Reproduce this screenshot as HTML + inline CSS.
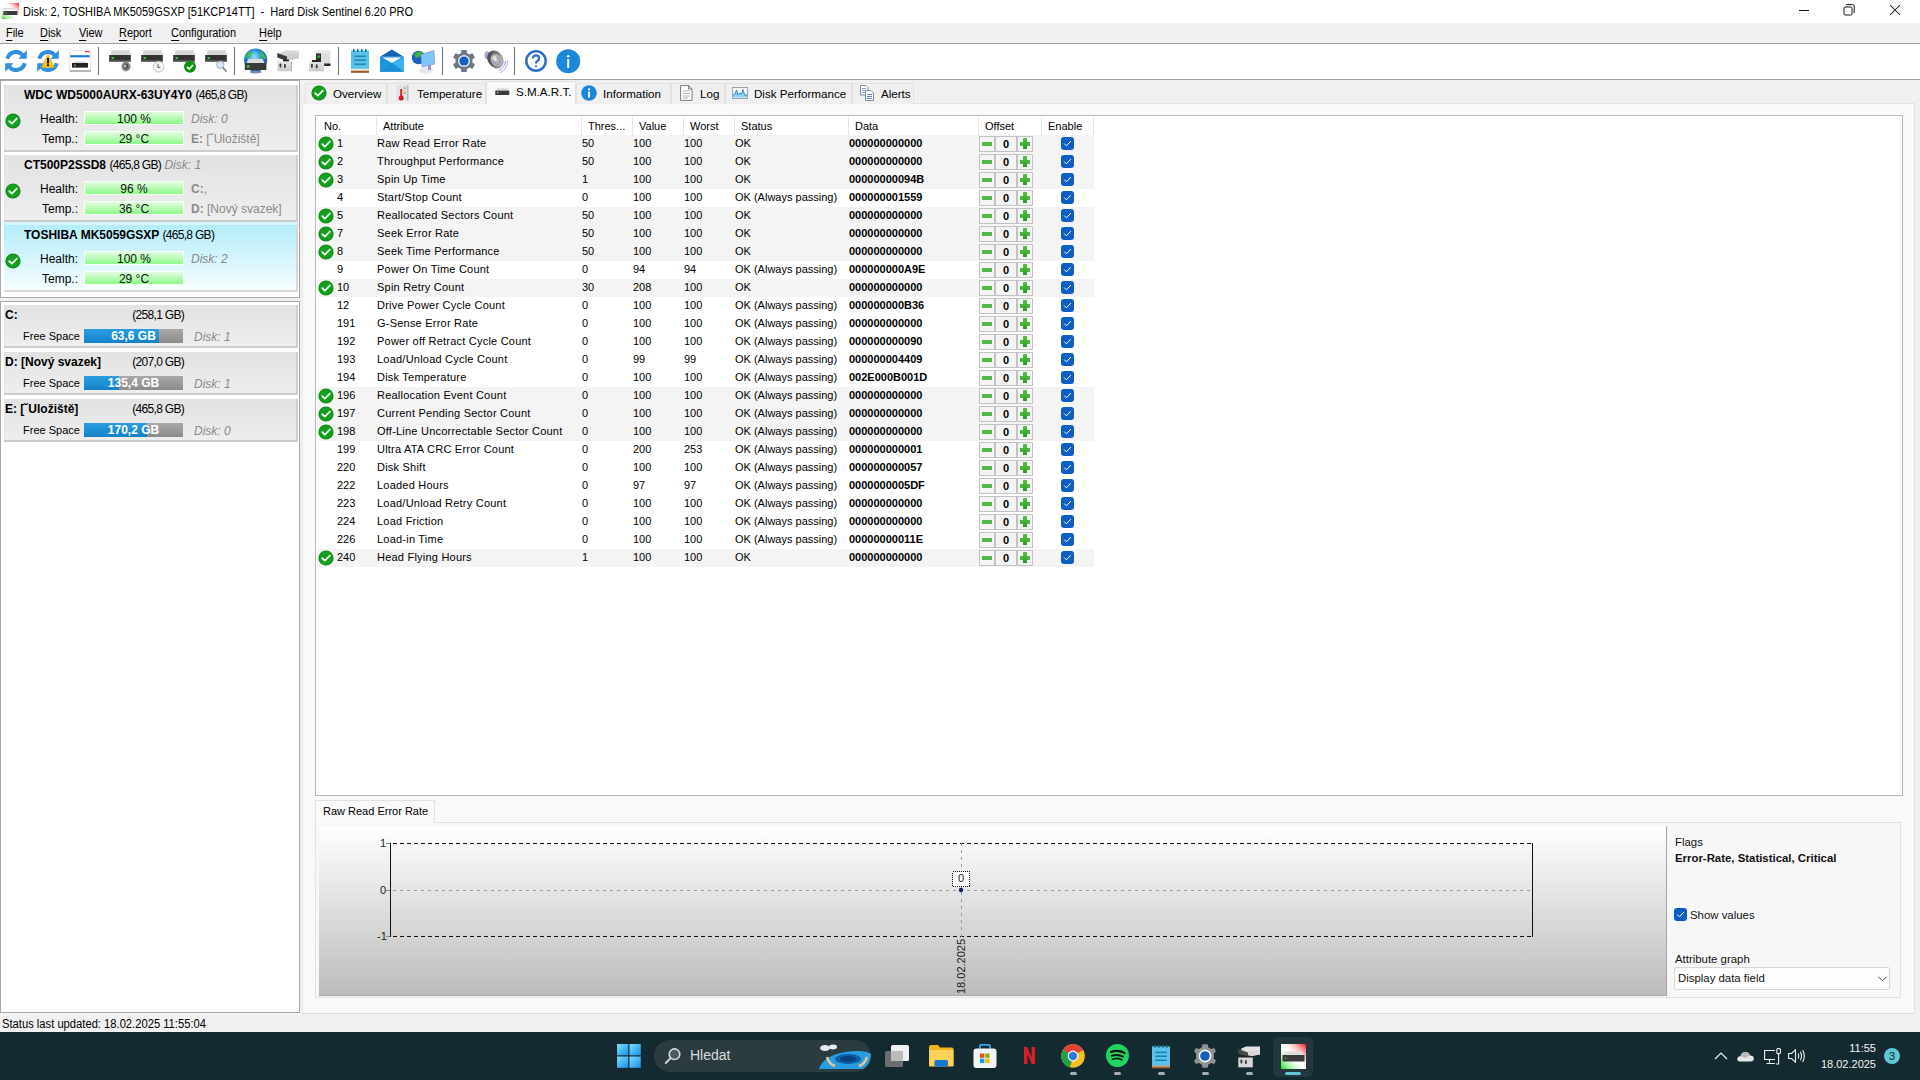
<!DOCTYPE html>
<html><head><meta charset="utf-8">
<style>
*{box-sizing:border-box;margin:0;padding:0}
html,body{width:1920px;height:1080px;overflow:hidden;background:#f0f0f0;font-family:"Liberation Sans",sans-serif;color:#000;font-size:11px}
.abs{position:absolute}
#title{position:absolute;left:0;top:0;width:1920px;height:23px;background:#fff}
#title .t{position:absolute;left:23px;top:5px;font-size:12px;white-space:pre;color:#000;transform:scaleX(0.918);transform-origin:0 0}
#menu{position:absolute;left:0;top:23px;width:1920px;height:21px;background:#f0f0f0;border-bottom:1px solid #a0a0a0}
#menu span{position:absolute;top:3px;font-size:12px;transform:scaleX(0.91);transform-origin:0 0}
#menu u{text-decoration:none;border-bottom:1px solid #000}
#tool{position:absolute;left:0;top:44px;width:1920px;height:36px;background:#fff;border-bottom:1px solid #a0a0a0}
.sep{position:absolute;top:3px;width:1px;height:28px;background:#6e6e6e}
#left1{position:absolute;left:0;top:80px;width:300px;height:218px;background:#fff;border:1px solid #a8a8a8}
#left2{position:absolute;left:0;top:301px;width:300px;height:712px;background:#fff;border:1px solid #a8a8a8}
.card{position:absolute;left:3px;width:294px;background:linear-gradient(#e2e2e2,#eeeeee);border-bottom:2px solid #cbcbcb;border-right:2px solid #d0d0d0}
.selbg{position:absolute;left:2px;top:141px;width:296px;height:4px;background:#d6f8fd}
.dski{font-weight:normal;color:#8a8a8a}
.dsk b{font-weight:bold}
.card .ttl{position:absolute;left:20px;top:3px;font-size:12px;font-weight:bold;white-space:pre}
.card .ttl span{font-weight:normal;letter-spacing:-0.7px}
.lbl{position:absolute;font-size:12px;white-space:pre}
.gbar{position:absolute;height:14px;width:100px;background:linear-gradient(#e4fde2,#8ef98a);border:1px solid #f6fff4;text-align:center;font-size:12px;line-height:14px;color:#111}
.dsk{position:absolute;font-size:12px;font-style:italic;color:#8a8a8a;white-space:pre}
.pbar{position:absolute;height:14px;width:100px;background:linear-gradient(#a9a9a9,#8b8b8b);text-align:center;font-size:12px;line-height:14px;color:#fff;font-weight:bold;overflow:hidden}
.pbar .fill{position:absolute;left:0;top:0;height:14px;background:linear-gradient(#2a9fe0,#1481c9)}
.pbar .tx{position:relative}
#tabs{position:absolute;left:300px;top:80px;width:1620px;height:24px}
.tab{position:absolute;top:3px;height:21px;background:#f0f0f0;border:1px solid #e2e2e2;border-bottom:none}
.tab .tx{position:absolute;top:3px;font-size:11.6px;white-space:pre}
#content{position:absolute;left:302px;top:103px;width:1613px;height:911px;background:#f9f9f9;border-top:1px solid #e2e2e2;border-right:1px solid #e2e2e2;border-left:1px solid #e8e8e8;border-bottom:1px solid #dedede}
#table{position:absolute;left:315px;top:115px;width:1588px;height:681px;background:#fff;border:1px solid #b9b9bc}
.hd{position:absolute;top:4px;font-size:11px;white-space:pre}
.hdiv{position:absolute;top:1px;width:1px;height:18px;background:#e5e5e5}
.row{position:absolute;left:317px;width:777px;height:18px}
.row .c{position:absolute;top:2px;font-size:11px;white-space:pre;margin-left:-317px}
.row .b{font-weight:bold}
.ck{display:block}
.ofs{position:absolute;left:662px;top:1px;width:54px;height:16px}
.ofs>div{position:absolute;top:0;height:16px;border:1px solid #c3c3c3;background:#f4f4f4}
.bm{left:0;width:16px}
.bv{left:16px;width:22px;font-weight:bold;text-align:center;font-size:11px;line-height:14px}
.bp{left:38px;width:16px}
.bm i{position:absolute;left:2px;top:5px;width:10px;height:4px;background:#54b848}
.bp i{position:absolute;left:2px;top:5px;width:10px;height:4px;background:#47b83c}
.bp b{position:absolute;left:5px;top:1px;width:4px;height:11px;background:linear-gradient(#54c448,#2f9a28)}
.en{position:absolute;left:744px;top:2px;width:13px;height:13px}
#gtab{position:absolute;left:315px;top:800px;width:120px;height:23px;background:#f9f9f9;border:1px solid #e2e2e2;border-bottom:none}
#gtab span{position:absolute;left:7px;top:4px;font-size:11px;white-space:pre}
#gbox{position:absolute;left:315px;top:822px;width:1586px;height:176px;border:1px solid #e2e2e2;background:#f7f7f7}
#graph{position:absolute;left:319px;top:826px;width:1348px;height:170px;background:linear-gradient(#ffffff,#bcbcbc);border-right:1px solid #a4a4a4;border-bottom:1px solid #a8a8a8}
.gl{position:absolute;font-size:11px;color:#1a1a1a;white-space:pre;line-height:13px}
.gd{transform:rotate(-90deg);transform-origin:center center;width:58px;text-align:center;font-size:11px}
#rpanel{position:absolute;left:1675px;top:836px;width:220px;height:160px}
.rp{position:absolute;font-size:11.4px;white-space:pre;color:#111}
.dd{position:absolute;left:-1px;top:131px;width:216px;height:23px;background:#fdfdfd;border:1px solid #d6d6d6;border-radius:2px}
.ind{position:absolute;top:40px;width:7px;height:3px;border-radius:2px;background:#a7adaf}
.tt{font-size:11px;color:#f4f4f4;white-space:pre}
#status{position:absolute;left:0;top:1014px;width:1920px;height:18px;background:#f0f0f0}
#status span{position:absolute;left:2px;top:3px;font-size:12px;white-space:pre;transform:scaleX(0.933);transform-origin:0 0}
#taskbar{position:absolute;left:0;top:1032px;width:1920px;height:48px;background:#132a30}
</style></head><body>

<div id="title"><svg class="abs" style="left:2px;top:3px" width="17" height="16" viewBox="0 0 17 16">
  <defs><linearGradient id="tr" x1="0" y1="1" x2="1" y2="0"><stop offset="0" stop-color="#fff" stop-opacity="0"/><stop offset="0.5" stop-color="#fff" stop-opacity="0"/><stop offset="1" stop-color="#f21818"/></linearGradient>
  <linearGradient id="tg" x1="0" y1="1" x2="1" y2="0"><stop offset="0" stop-color="#20e020"/><stop offset="0.5" stop-color="#fff" stop-opacity="0"/><stop offset="1" stop-color="#fff" stop-opacity="0"/></linearGradient></defs>
  <rect x="0" y="0" width="17" height="16" fill="#fff"/><rect x="0" y="0" width="17" height="16" fill="url(#tr)"/><rect x="0" y="0" width="17" height="16" fill="url(#tg)"/>
  <rect x="1" y="5" width="15" height="1.5" fill="#dcdcdc"/><rect x="1.5" y="8" width="14" height="4" fill="#3a3a3a"/><rect x="3.5" y="9.5" width="1" height="1" fill="#ccc"/>
 </svg>
 <div class="abs" style="left:1799px;top:10px;width:10px;height:1px;background:#111"></div>
 <svg class="abs" style="left:1843px;top:4px" width="12" height="12" viewBox="0 0 12 12"><rect x="1" y="3" width="8" height="8" rx="1.2" stroke="#111" stroke-width="1" fill="none"/><path d="M3 1.2 Q3 0.6 4 0.6 L9.5 0.6 Q11.2 0.6 11.2 2.2 L11.2 8 Q11.2 9 10.6 9" stroke="#111" stroke-width="1" fill="none"/></svg>
 <svg class="abs" style="left:1889px;top:4px" width="12" height="12" viewBox="0 0 12 12"><path d="M1 1 L11 11 M11 1 L1 11" stroke="#111" stroke-width="1.05"/></svg>
<span class="t">Disk: 2, TOSHIBA MK5059GSXP [51KCP14TT]  -  Hard Disk Sentinel 6.20 PRO</span></div>
<div id="menu">
<span style="left:6px"><u>F</u>ile</span>
<span style="left:40px"><u>D</u>isk</span>
<span style="left:79px"><u>V</u>iew</span>
<span style="left:119px"><u>R</u>eport</span>
<span style="left:171px"><u>C</u>onfiguration</span>
<span style="left:259px"><u>H</u>elp</span>
</div>
<div id="tool">

<svg class="abs" style="left:5px;top:6px" width="22" height="22" viewBox="0 0 22 22">
 <path d="M2.27 8.82 A9 9 0 0 1 17.9 5.2" stroke="#2f8fe0" stroke-width="4" fill="none"/>
 <path d="M21.8 0.2 L21.8 8.7 L13.4 8.7 Z" fill="#2f8fe0"/>
 <path d="M19.73 13.18 A9 9 0 0 1 4.1 16.8" stroke="#2f8fe0" stroke-width="4" fill="none"/>
 <path d="M0.2 21.8 L0.2 13.3 L8.6 13.3 Z" fill="#2f8fe0"/>
</svg>
<svg class="abs" style="left:37px;top:6px" width="22" height="22" viewBox="0 0 22 22">
 <path d="M2.27 8.82 A9 9 0 0 1 17.9 5.2" stroke="#2f8fe0" stroke-width="4" fill="none"/>
 <path d="M21.8 0.2 L21.8 8.7 L13.4 8.7 Z" fill="#2f8fe0"/>
 <path d="M19.73 13.18 A9 9 0 0 1 4.1 16.8" stroke="#2f8fe0" stroke-width="4" fill="none"/>
 <path d="M0.2 21.8 L0.2 13.3 L8.6 13.3 Z" fill="#2f8fe0"/>
 <path d="M11 4.2 L17.3 17.4 L4.6 17.4 Z" fill="#f6c514" stroke="#e0a800" stroke-width="0.6"/>
 <rect x="10" y="8" width="2" height="5.5" fill="#111"/><rect x="10" y="14.3" width="2" height="1.9" fill="#111"/>
</svg>
<svg class="abs" style="left:69px;top:6px" width="22" height="22" viewBox="0 0 22 22">
 <rect x="0.5" y="0.5" width="21" height="20.5" fill="#fff" stroke="#e4e4e4"/>
 <rect x="1" y="20.2" width="21" height="1.6" fill="#a8a8a8"/>
 <rect x="1.2" y="5.2" width="19.5" height="2.1" fill="#1478d0"/>
 <rect x="16" y="1" width="4.5" height="1.2" fill="#d33"/>
 <path d="M4 13.6 L18 13.6 L17 11.2 L5 11.2 Z" fill="#e2e2e2"/>
 <rect x="3" y="13" width="16" height="4.6" fill="#222"/>
 <rect x="5" y="14.6" width="1.6" height="1.6" fill="#5fd35f"/>
</svg>
<div class="sep" style="left:98px"></div>
<svg class="abs" style="left:109px;top:6px" width="24" height="23" viewBox="0 0 24 23">
 <path d="M1.5 5 L3 0.3 L20.5 0.3 L22 5 Z" fill="#d6d6d6"/>
 <rect x="0.2" y="5" width="21.6" height="6.6" fill="#333"/>
 <rect x="0.2" y="10.4" width="21.6" height="1.2" fill="#666"/>
 <rect x="2.6" y="7" width="2.3" height="2.2" fill="#3ec03e"/>
 <ellipse cx="17" cy="16.5" rx="4.5" ry="5" fill="#8a8a8a"/><ellipse cx="17" cy="16.5" rx="2.5" ry="3" fill="#555"/><ellipse cx="16" cy="16" rx="1.2" ry="1.5" fill="#bbb"/>
</svg><svg class="abs" style="left:141px;top:6px" width="24" height="23" viewBox="0 0 24 23">
 <path d="M1.5 5 L3 0.3 L20.5 0.3 L22 5 Z" fill="#d6d6d6"/>
 <rect x="0.2" y="5" width="21.6" height="6.6" fill="#333"/>
 <rect x="0.2" y="10.4" width="21.6" height="1.2" fill="#666"/>
 <rect x="2.6" y="7" width="2.3" height="2.2" fill="#3ec03e"/>
 <circle cx="17.5" cy="16.8" r="5.3" fill="#f4f4f4" stroke="#bdbdbd" stroke-width="0.9"/><path d="M17 13.8 V17.4 H19.4" stroke="#444" stroke-width="0.9" fill="none"/>
</svg><svg class="abs" style="left:173px;top:6px" width="24" height="23" viewBox="0 0 24 23">
 <path d="M1.5 5 L3 0.3 L20.5 0.3 L22 5 Z" fill="#d6d6d6"/>
 <rect x="0.2" y="5" width="21.6" height="6.6" fill="#333"/>
 <rect x="0.2" y="10.4" width="21.6" height="1.2" fill="#666"/>
 <rect x="2.6" y="7" width="2.3" height="2.2" fill="#3ec03e"/>
 <circle cx="17" cy="16.8" r="6" fill="#0d8f16"/><path d="M14 17 L16.2 19 L20.2 14.8" stroke="#ddffdd" stroke-width="1.7" fill="none"/>
</svg><svg class="abs" style="left:205px;top:6px" width="24" height="23" viewBox="0 0 24 23">
 <path d="M1.5 5 L3 0.3 L20.5 0.3 L22 5 Z" fill="#d6d6d6"/>
 <rect x="0.2" y="5" width="21.6" height="6.6" fill="#333"/>
 <rect x="0.2" y="10.4" width="21.6" height="1.2" fill="#666"/>
 <rect x="2.6" y="7" width="2.3" height="2.2" fill="#3ec03e"/>
 <circle cx="15.3" cy="14.9" r="3.6" fill="#dbe9fa" stroke="#aab" stroke-width="1"/><path d="M17.8 17.5 L21.5 21.6" stroke="#8a8a8a" stroke-width="1.8"/>
</svg>
<div class="sep" style="left:234px"></div>
<svg class="abs" style="left:243px;top:4px" width="25" height="26" viewBox="0 0 25 26">
 <defs><radialGradient id="gl" cx="0.45" cy="0.35" r="0.6"><stop offset="0" stop-color="#8fe3ff"/><stop offset="0.5" stop-color="#2a8fd8"/><stop offset="1" stop-color="#1548a0"/></radialGradient></defs>
 <circle cx="12.6" cy="12" r="11.5" fill="url(#gl)"/>
 <path d="M2 9 Q5 3 9 4 Q8 8 4 10 Z M17 3 Q22 6 23 11 Q20 12 18 8 Z" fill="#3cbf3c"/>
 <path d="M3.5 15 L5.5 10.8 L19.5 10.8 L21.5 15 Z" fill="#dcdcdc"/>
 <rect x="1.8" y="15" width="21.6" height="7" fill="#3a3a3a"/>
 <rect x="4" y="17.2" width="2.5" height="2.5" fill="#3ec03e"/>
 <ellipse cx="12.6" cy="24" rx="6" ry="1.5" fill="#6b8bb0"/>
</svg>
<svg class="abs" style="left:277px;top:6px" width="23" height="22" viewBox="0 0 23 22">
 <defs><linearGradient id="bx" x1="0" y1="0" x2="0" y2="1"><stop offset="0" stop-color="#e6e6e6"/><stop offset="1" stop-color="#c8c8c8"/></linearGradient></defs>
 <path d="M3.5 2.5 L8 0.6 L22 0.6 L22 8.5 L10 10.5 L3.5 7 Z" fill="#d6d6d6"/>
 <path d="M3.5 2.5 L10 5.5 L22 3.5 L22 8.5 L10 10.5 L3.5 7 Z" fill="#cfcfcf"/>
 <path d="M0.3 3 L10 6.5 L10 11 L0.3 7.5 Z" fill="#3a3a3a"/>
 <rect x="6" y="9.5" width="6" height="2.2" fill="#222"/>
 <rect x="0.3" y="11.5" width="14.5" height="9.8" fill="url(#bx)"/>
 <rect x="14" y="11.5" width="1" height="9.8" fill="#b0b0b0"/>
 <rect x="2.5" y="13.5" width="1.8" height="4" rx="0.8" fill="#3a3a3a"/>
 <rect x="7" y="14" width="1.8" height="4" rx="0.8" fill="#3a3a3a"/>
</svg>
<svg class="abs" style="left:309px;top:6px" width="22" height="22" viewBox="0 0 22 22">
 <rect x="6.8" y="0.5" width="14.5" height="15.5" fill="#dedede"/>
 <rect x="6.8" y="0.5" width="14.5" height="2" fill="#ececec"/>
 <rect x="7" y="3.5" width="5" height="8.5" fill="#2c2c2c"/>
 <rect x="8.3" y="5.3" width="2.6" height="2.6" fill="#2fa83a"/>
 <rect x="14.5" y="13.5" width="7" height="2.5" fill="#2a2a2a"/>
 <rect x="0.2" y="11.5" width="15" height="9.8" fill="url(#bx)"/>
 <rect x="3" y="10" width="9" height="2" fill="#262626"/>
 <rect x="2" y="13.8" width="1.8" height="4" rx="0.8" fill="#3a3a3a"/>
 <rect x="6.8" y="14.3" width="1.8" height="4" rx="0.8" fill="#3a3a3a"/>
</svg>
<div class="sep" style="left:338px"></div>
<svg class="abs" style="left:351px;top:4px" width="19" height="25" viewBox="0 0 19 25">
 <rect x="0" y="2.4" width="18" height="18.5" fill="#5ac2ea"/>
 <rect x="2" y="1" width="1.5" height="3" fill="#1a6f8a"/><rect x="6" y="1" width="1.5" height="3" fill="#1a6f8a"/><rect x="10" y="1" width="1.5" height="3" fill="#1a6f8a"/><rect x="14" y="1" width="1.5" height="3" fill="#1a6f8a"/>
 <rect x="3.3" y="7.6" width="11.5" height="1.3" fill="#1a7fa0"/><rect x="3.3" y="11.5" width="11.5" height="1.3" fill="#1a7fa0"/><rect x="3.3" y="15.5" width="11.5" height="1.3" fill="#1a7fa0"/>
 <rect x="0" y="20.9" width="18" height="1.8" fill="#f2e4cf"/><rect x="0" y="22.7" width="18" height="2.1" fill="#9a5a2a"/>
</svg>
<svg class="abs" style="left:380px;top:5px" width="24" height="23" viewBox="0 0 24 23">
 <path d="M0 7.7 L11.8 0.5 L23.7 7.7 Z" fill="#0f62b4"/>
 <rect x="0" y="7.7" width="23.7" height="15" fill="#1b97df"/>
 <path d="M2.5 8.5 L21.5 8.5 L12 14 Z" fill="#f4f4f4"/>
 <path d="M12 14 L23.7 9 L23.7 22.7 Z" fill="#37b6ef"/>
 <path d="M0 22.7 L12 14 L23.7 22.7 Z" fill="#1d8fd6"/>
</svg>
<svg class="abs" style="left:411px;top:4px" width="26" height="26" viewBox="0 0 26 26">
 <circle cx="7.5" cy="9.5" r="6.8" fill="#1b62c0"/><path d="M3 6 Q7 2 11 4 Q10 9 5 10 Z" fill="#36b83a"/>
 <path d="M10 6.5 L23 2.5 L23.5 16 L11 19 Z" fill="#7cc8f8" stroke="#8b8fd0" stroke-width="0.7"/>
 <ellipse cx="15" cy="22.5" rx="7" ry="3.2" fill="#e6e6f0"/><rect x="17" y="17" width="3" height="5" fill="#9a8fd0"/>
</svg>
<div class="sep" style="left:442px"></div>
<svg class="abs" style="left:452px;top:6px" width="24" height="22" viewBox="0 0 24 22">
 <circle cx="12" cy="11" r="8.6" fill="#6e7780"/><rect x="9.2" y="-0.2" width="5.6" height="6" rx="1" fill="#6e7780" transform="rotate(0 12 11)"/><rect x="9.2" y="-0.2" width="5.6" height="6" rx="1" fill="#6e7780" transform="rotate(60 12 11)"/><rect x="9.2" y="-0.2" width="5.6" height="6" rx="1" fill="#6e7780" transform="rotate(120 12 11)"/><rect x="9.2" y="-0.2" width="5.6" height="6" rx="1" fill="#6e7780" transform="rotate(180 12 11)"/><rect x="9.2" y="-0.2" width="5.6" height="6" rx="1" fill="#6e7780" transform="rotate(240 12 11)"/><rect x="9.2" y="-0.2" width="5.6" height="6" rx="1" fill="#6e7780" transform="rotate(300 12 11)"/>
 <circle cx="12" cy="11" r="6" fill="#dfeefc"/><circle cx="12" cy="11" r="4.6" fill="#0f62b8"/>
</svg>
<svg class="abs" style="left:484px;top:5px" width="24" height="25" viewBox="0 0 24 25">
 <defs><linearGradient id="spk" x1="0" y1="0" x2="1" y2="1"><stop offset="0" stop-color="#2e2e2e"/><stop offset="0.6" stop-color="#8a8a8a"/><stop offset="1" stop-color="#cfcfcf"/></linearGradient></defs>
 <path d="M15 21.5 Q21 18.5 21.5 12" stroke="#9c90d8" stroke-width="1" fill="none"/>
 <path d="M16 23.8 Q23.5 20 23.5 11.5" stroke="#b0a6e0" stroke-width="1" fill="none"/>
 <ellipse cx="3.4" cy="6.3" rx="2.6" ry="3.6" fill="#b2a8e0" stroke="#8a80c0" stroke-width="0.6"/>
 <ellipse cx="11.5" cy="10.5" rx="7.6" ry="9.6" transform="rotate(-35 11.5 10.5)" fill="url(#spk)"/>
 <ellipse cx="12.3" cy="11.3" rx="5" ry="6.8" transform="rotate(-35 12.3 11.3)" fill="#b5b5b5"/>
 <ellipse cx="12.8" cy="12" rx="3" ry="4" transform="rotate(-35 12.8 12)" fill="none" stroke="#9088c8" stroke-width="0.8"/>
 <ellipse cx="10.8" cy="9.6" rx="2" ry="2.6" transform="rotate(-35 10.8 9.6)" fill="#e2e2e2"/>
</svg>
<div class="sep" style="left:514px"></div>
<svg class="abs" style="left:525px;top:6px" width="22" height="22" viewBox="0 0 22 22">
 <circle cx="11" cy="11" r="9.7" fill="#fff" stroke="#2d6fc4" stroke-width="2.5"/>
 <path d="M7.9 8.6 Q7.9 5.4 11 5.4 Q14.1 5.4 14.1 8.3 Q14.1 10.2 12.1 11.2 Q11 11.8 11 13.6" stroke="#2d6fc4" stroke-width="2.2" fill="none"/>
 <circle cx="11" cy="16.3" r="1.15" fill="#2d6fc4"/>
</svg>
<svg class="abs" style="left:556px;top:5px" width="25" height="25" viewBox="0 0 25 25">
 <circle cx="12.2" cy="12.2" r="12" fill="#1a88dc"/>
 <rect x="11.2" y="10" width="2" height="9" fill="#fff"/><circle cx="12.2" cy="7.2" r="1.25" fill="#fff"/>
</svg>

</div>

<div id="left1">
<div class="selbg"></div>
<div class="card" style="top:4px;height:67px;">
 <div class="ttl">WDC WD5000AURX-63UY4Y0 <span>(465,8 GB)</span></div>
 <svg class="abs" width="16" height="16" viewBox="0 0 16 16" style="left:1px;top:28px"><circle cx="8" cy="8" r="7.6" fill="#0f8a17"/><circle cx="8" cy="8" r="6.6" fill="#14a01e"/><path d="M4.3 8.2 L6.9 10.6 L11.8 5.6" stroke="#e8ffe8" stroke-width="1.9" fill="none" stroke-linecap="round" stroke-linejoin="round"/></svg>
 <span class="lbl" style="right:218px;top:27px">Health:</span>
 <span class="lbl" style="right:218px;top:47px">Temp.:</span>
 <div class="gbar" style="left:80px;top:26px">100 %</div>
 <div class="gbar" style="left:80px;top:46px">29 °C</div>
 <span class="dsk" style="left:187px;top:27px">Disk: 0</span><span class="dsk" style="left:187px;top:47px;font-style:normal"><b>E:</b> [˘Uložiště]</span>
</div>
<div class="card" style="top:74px;height:67px;">
 <div class="ttl">CT500P2SSD8 <span>(465,8 GB)</span> <i class="dski">Disk: 1</i></div>
 <svg class="abs" width="16" height="16" viewBox="0 0 16 16" style="left:1px;top:28px"><circle cx="8" cy="8" r="7.6" fill="#0f8a17"/><circle cx="8" cy="8" r="6.6" fill="#14a01e"/><path d="M4.3 8.2 L6.9 10.6 L11.8 5.6" stroke="#e8ffe8" stroke-width="1.9" fill="none" stroke-linecap="round" stroke-linejoin="round"/></svg>
 <span class="lbl" style="right:218px;top:27px">Health:</span>
 <span class="lbl" style="right:218px;top:47px">Temp.:</span>
 <div class="gbar" style="left:80px;top:26px">96 %</div>
 <div class="gbar" style="left:80px;top:46px">36 °C</div>
 <span class="dsk" style="left:187px;top:27px;font-style:normal"><b>C:</b>,</span><span class="dsk" style="left:187px;top:47px;font-style:normal"><b>D:</b> [Nový svazek]</span>
</div>
<div class="card" style="top:144px;height:67px;background:linear-gradient(#b3edfa,#f6fdff);border-bottom-color:#d9d9db;border-right-color:#d9d9db">
 <div class="ttl">TOSHIBA MK5059GSXP <span>(465,8 GB)</span></div>
 <svg class="abs" width="16" height="16" viewBox="0 0 16 16" style="left:1px;top:28px"><circle cx="8" cy="8" r="7.6" fill="#0f8a17"/><circle cx="8" cy="8" r="6.6" fill="#14a01e"/><path d="M4.3 8.2 L6.9 10.6 L11.8 5.6" stroke="#e8ffe8" stroke-width="1.9" fill="none" stroke-linecap="round" stroke-linejoin="round"/></svg>
 <span class="lbl" style="right:218px;top:27px">Health:</span>
 <span class="lbl" style="right:218px;top:47px">Temp.:</span>
 <div class="gbar" style="left:80px;top:26px">100 %</div>
 <div class="gbar" style="left:80px;top:46px">29 °C</div>
 <span class="dsk" style="left:187px;top:27px">Disk: 2</span>
</div>
</div>
<div id="left2">
<div class="card pc" style="top:3px;height:43px">
 <span class="lbl" style="left:1px;top:3px;font-weight:bold">C:</span>
 <span class="lbl" style="right:112px;top:3px;letter-spacing:-0.7px">(258,1 GB)</span>
 <span class="lbl" style="left:19px;top:25px;font-size:11px">Free Space</span>
 <div class="pbar" style="left:80px;top:24px;width:99px"><div class="fill" style="width:75px"></div><span class="tx">63,6 GB</span></div>
 <span class="dsk" style="left:190px;top:25px">Disk: 1</span>
</div>
<div class="card pc" style="top:50px;height:43px">
 <span class="lbl" style="left:1px;top:3px;font-weight:bold">D: [Nový svazek]</span>
 <span class="lbl" style="right:112px;top:3px;letter-spacing:-0.7px">(207,0 GB)</span>
 <span class="lbl" style="left:19px;top:25px;font-size:11px">Free Space</span>
 <div class="pbar" style="left:80px;top:24px;width:99px"><div class="fill" style="width:35px"></div><span class="tx">135,4 GB</span></div>
 <span class="dsk" style="left:190px;top:25px">Disk: 1</span>
</div>
<div class="card pc" style="top:97px;height:43px">
 <span class="lbl" style="left:1px;top:3px;font-weight:bold">E: [˘Uložiště]</span>
 <span class="lbl" style="right:112px;top:3px;letter-spacing:-0.7px">(465,8 GB)</span>
 <span class="lbl" style="left:19px;top:25px;font-size:11px">Free Space</span>
 <div class="pbar" style="left:80px;top:24px;width:99px"><div class="fill" style="width:63px"></div><span class="tx">170,2 GB</span></div>
 <span class="dsk" style="left:190px;top:25px">Disk: 0</span>
</div>
</div>
<div id="content"></div>
<div id="tabs">
 <div class="tab" style="left:5px;width:82px"><svg class="abs" style="left:5px;top:1px" width="16" height="16" viewBox="0 0 16 16"><circle cx="8" cy="8" r="7.6" fill="#0f8a17"/><circle cx="8" cy="8" r="6.6" fill="#14a01e"/><path d="M4.3 8.2 L6.9 10.6 L11.8 5.6" stroke="#e8ffe8" stroke-width="1.9" fill="none" stroke-linecap="round" stroke-linejoin="round"/></svg><span class="tx" style="left:27px">Overview</span></div>
 <div class="tab" style="left:87px;width:99px"><svg class="abs" style="left:6px;top:1px" width="16" height="16" viewBox="0 0 16 16"><rect x="0.5" y="0" width="14" height="15.6" fill="#dfe3ea"/><rect x="0.5" y="0" width="1.5" height="15.6" fill="#f4f6f8"/><rect x="13" y="0" width="1.5" height="15.6" fill="#b8bcc4"/><rect x="6.2" y="4" width="2" height="9" fill="#d42020"/><circle cx="7.2" cy="12.9" r="2.5" fill="#d21818"/><rect x="9.5" y="2.5" width="2.5" height="1.2" fill="#9a9a9a"/><rect x="9.5" y="5" width="2.5" height="1.2" fill="#e0d040"/><rect x="9.5" y="7.5" width="2.5" height="1.2" fill="#70c060"/></svg><span class="tx" style="left:29px">Temperature</span></div>
 <div class="tab sel" style="left:186px;width:90px;top:1px;height:23px;background:#f9f9f9"><svg class="abs" style="left:8px;top:6px" width="15" height="8" viewBox="0 0 15 8"><path d="M1 2.6 L2 0.2 L13 0.2 L14 2.6 Z" fill="#d8d8d8"/><rect x="0.3" y="2.6" width="14" height="4.4" fill="#3a3a3a"/><rect x="2" y="4" width="1.2" height="1.2" fill="#ccc"/></svg><span class="tx" style="left:29px;top:3px">S.M.A.R.T.</span></div>
 <div class="tab" style="left:276px;width:95px"><svg class="abs" style="left:4px;top:1px" width="16" height="16" viewBox="0 0 16 16"><circle cx="8" cy="8" r="7.8" fill="#1a86d8"/><rect x="7.1" y="6.5" width="1.8" height="6" fill="#fff"/><circle cx="8" cy="4.3" r="1.1" fill="#fff"/></svg><span class="tx" style="left:26px">Information</span></div>
 <div class="tab" style="left:371px;width:54px"><svg class="abs" style="left:8px;top:1px" width="13" height="16" viewBox="0 0 13 16"><path d="M0.6 0.6 L8.5 0.6 L12 4 L12 15.4 L0.6 15.4 Z" fill="#fff" stroke="#7a7a7a" stroke-width="1"/><path d="M8.5 0.6 L8.5 4 L12 4" fill="none" stroke="#7a7a7a" stroke-width="1"/><path d="M3 6 H10 M3 8.5 H10 M3 11 H10 M3 13 H8" stroke="#b5b5b5" stroke-width="1"/></svg><span class="tx" style="left:28px">Log</span></div>
 <div class="tab" style="left:425px;width:127px"><svg class="abs" style="left:6px;top:3px" width="16" height="12" viewBox="0 0 16 12"><rect x="0.5" y="0.5" width="15" height="11" fill="#f8f8f8" stroke="#9aa3ab"/><path d="M1 10.5 L1 8 L3 7 L4.5 3 L6 8 L8 6 L9.5 7 L11 2.5 L12.5 8 L15 8 L15 10.5 Z" fill="#8fd0f5"/><path d="M1 8 L3 7 L4.5 3 L6 8 L8 6 L9.5 7 L11 2.5 L12.5 8 L15 8" fill="none" stroke="#2b8ad0" stroke-width="1"/></svg><span class="tx" style="left:28px">Disk Performance</span></div>
 <div class="tab" style="left:552px;width:62px"><svg class="abs" style="left:7px;top:1px" width="14" height="16" viewBox="0 0 14 16"><path d="M0.5 0.5 L6 0.5 L8 2.5 L8 10 L0.5 10 Z" fill="#fff" stroke="#8a8a8a"/><path d="M2 3.5 H6 M2 5.5 H6 M2 7.5 H6" stroke="#7aa0d0"/><path d="M5.5 5.5 L11 5.5 L13.5 8 L13.5 15.5 L5.5 15.5 Z" fill="#fff" stroke="#8a8a8a"/><path d="M7 9.5 H12 M7 11.5 H12 M7 13.5 H12" stroke="#5a8ad0"/></svg><span class="tx" style="left:28px">Alerts</span></div>
</div>
<div id="table">
 <span class="hd" style="left:8px">No.</span>
 <span class="hd" style="left:67px">Attribute</span>
 <span class="hd" style="left:272px">Thres...</span>
 <span class="hd" style="left:323px">Value</span>
 <span class="hd" style="left:374px">Worst</span>
 <span class="hd" style="left:425px">Status</span>
 <span class="hd" style="left:539px">Data</span>
 <span class="hd" style="left:669px">Offset</span>
 <span class="hd" style="left:732px">Enable</span>
 <div class="hdiv" style="left:60px"></div>
 <div class="hdiv" style="left:265px"></div>
 <div class="hdiv" style="left:316px"></div>
 <div class="hdiv" style="left:367px"></div>
 <div class="hdiv" style="left:418px"></div>
 <div class="hdiv" style="left:532px"></div>
 <div class="hdiv" style="left:662px"></div>
 <div class="hdiv" style="left:725px"></div>
 <div class="hdiv" style="left:777px"></div>
</div>
<div class="row" style="top:135px;background:#f4f4f4">
<div style="position:absolute;left:1px;top:1px"><svg class="ck" width="16" height="16" viewBox="0 0 16 16"><circle cx="8" cy="8" r="7.6" fill="#0f8a17"/><circle cx="8" cy="8" r="6.6" fill="#14a01e"/><path d="M4.3 8.2 L6.9 10.6 L11.8 5.6" stroke="#e8ffe8" stroke-width="1.9" fill="none" stroke-linecap="round" stroke-linejoin="round"/></svg></div>
<span class="c" style="left:337px">1</span>
<span class="c" style="left:377px;letter-spacing:0.22px">Raw Read Error Rate</span>
<span class="c" style="left:582px">50</span>
<span class="c" style="left:633px">100</span>
<span class="c" style="left:684px">100</span>
<span class="c" style="left:735px">OK</span>
<span class="c b" style="left:849px">000000000000</span>
<div class="ofs"><div class="bm"><i></i></div><div class="bv">0</div><div class="bp"><i></i><b></b></div></div>
<div class="en"><svg width="13" height="13" viewBox="0 0 13 13"><rect x="0" y="0" width="13" height="13" rx="3" fill="#0b5fc4"/><path d="M3.2 6.6 L5.4 8.8 L9.8 4.2" stroke="#fff" stroke-width="1" fill="none"/></svg></div>
</div>
<div class="row" style="top:153px;background:#f4f4f4">
<div style="position:absolute;left:1px;top:1px"><svg class="ck" width="16" height="16" viewBox="0 0 16 16"><circle cx="8" cy="8" r="7.6" fill="#0f8a17"/><circle cx="8" cy="8" r="6.6" fill="#14a01e"/><path d="M4.3 8.2 L6.9 10.6 L11.8 5.6" stroke="#e8ffe8" stroke-width="1.9" fill="none" stroke-linecap="round" stroke-linejoin="round"/></svg></div>
<span class="c" style="left:337px">2</span>
<span class="c" style="left:377px;letter-spacing:0.22px">Throughput Performance</span>
<span class="c" style="left:582px">50</span>
<span class="c" style="left:633px">100</span>
<span class="c" style="left:684px">100</span>
<span class="c" style="left:735px">OK</span>
<span class="c b" style="left:849px">000000000000</span>
<div class="ofs"><div class="bm"><i></i></div><div class="bv">0</div><div class="bp"><i></i><b></b></div></div>
<div class="en"><svg width="13" height="13" viewBox="0 0 13 13"><rect x="0" y="0" width="13" height="13" rx="3" fill="#0b5fc4"/><path d="M3.2 6.6 L5.4 8.8 L9.8 4.2" stroke="#fff" stroke-width="1" fill="none"/></svg></div>
</div>
<div class="row" style="top:171px;background:#f4f4f4">
<div style="position:absolute;left:1px;top:1px"><svg class="ck" width="16" height="16" viewBox="0 0 16 16"><circle cx="8" cy="8" r="7.6" fill="#0f8a17"/><circle cx="8" cy="8" r="6.6" fill="#14a01e"/><path d="M4.3 8.2 L6.9 10.6 L11.8 5.6" stroke="#e8ffe8" stroke-width="1.9" fill="none" stroke-linecap="round" stroke-linejoin="round"/></svg></div>
<span class="c" style="left:337px">3</span>
<span class="c" style="left:377px;letter-spacing:0.22px">Spin Up Time</span>
<span class="c" style="left:582px">1</span>
<span class="c" style="left:633px">100</span>
<span class="c" style="left:684px">100</span>
<span class="c" style="left:735px">OK</span>
<span class="c b" style="left:849px">00000000094B</span>
<div class="ofs"><div class="bm"><i></i></div><div class="bv">0</div><div class="bp"><i></i><b></b></div></div>
<div class="en"><svg width="13" height="13" viewBox="0 0 13 13"><rect x="0" y="0" width="13" height="13" rx="3" fill="#0b5fc4"/><path d="M3.2 6.6 L5.4 8.8 L9.8 4.2" stroke="#fff" stroke-width="1" fill="none"/></svg></div>
</div>
<div class="row" style="top:189px;background:#ffffff">
<span class="c" style="left:337px">4</span>
<span class="c" style="left:377px;letter-spacing:0.22px">Start/Stop Count</span>
<span class="c" style="left:582px">0</span>
<span class="c" style="left:633px">100</span>
<span class="c" style="left:684px">100</span>
<span class="c" style="left:735px">OK (Always passing)</span>
<span class="c b" style="left:849px">000000001559</span>
<div class="ofs"><div class="bm"><i></i></div><div class="bv">0</div><div class="bp"><i></i><b></b></div></div>
<div class="en"><svg width="13" height="13" viewBox="0 0 13 13"><rect x="0" y="0" width="13" height="13" rx="3" fill="#0b5fc4"/><path d="M3.2 6.6 L5.4 8.8 L9.8 4.2" stroke="#fff" stroke-width="1" fill="none"/></svg></div>
</div>
<div class="row" style="top:207px;background:#f4f4f4">
<div style="position:absolute;left:1px;top:1px"><svg class="ck" width="16" height="16" viewBox="0 0 16 16"><circle cx="8" cy="8" r="7.6" fill="#0f8a17"/><circle cx="8" cy="8" r="6.6" fill="#14a01e"/><path d="M4.3 8.2 L6.9 10.6 L11.8 5.6" stroke="#e8ffe8" stroke-width="1.9" fill="none" stroke-linecap="round" stroke-linejoin="round"/></svg></div>
<span class="c" style="left:337px">5</span>
<span class="c" style="left:377px;letter-spacing:0.22px">Reallocated Sectors Count</span>
<span class="c" style="left:582px">50</span>
<span class="c" style="left:633px">100</span>
<span class="c" style="left:684px">100</span>
<span class="c" style="left:735px">OK</span>
<span class="c b" style="left:849px">000000000000</span>
<div class="ofs"><div class="bm"><i></i></div><div class="bv">0</div><div class="bp"><i></i><b></b></div></div>
<div class="en"><svg width="13" height="13" viewBox="0 0 13 13"><rect x="0" y="0" width="13" height="13" rx="3" fill="#0b5fc4"/><path d="M3.2 6.6 L5.4 8.8 L9.8 4.2" stroke="#fff" stroke-width="1" fill="none"/></svg></div>
</div>
<div class="row" style="top:225px;background:#f4f4f4">
<div style="position:absolute;left:1px;top:1px"><svg class="ck" width="16" height="16" viewBox="0 0 16 16"><circle cx="8" cy="8" r="7.6" fill="#0f8a17"/><circle cx="8" cy="8" r="6.6" fill="#14a01e"/><path d="M4.3 8.2 L6.9 10.6 L11.8 5.6" stroke="#e8ffe8" stroke-width="1.9" fill="none" stroke-linecap="round" stroke-linejoin="round"/></svg></div>
<span class="c" style="left:337px">7</span>
<span class="c" style="left:377px;letter-spacing:0.22px">Seek Error Rate</span>
<span class="c" style="left:582px">50</span>
<span class="c" style="left:633px">100</span>
<span class="c" style="left:684px">100</span>
<span class="c" style="left:735px">OK</span>
<span class="c b" style="left:849px">000000000000</span>
<div class="ofs"><div class="bm"><i></i></div><div class="bv">0</div><div class="bp"><i></i><b></b></div></div>
<div class="en"><svg width="13" height="13" viewBox="0 0 13 13"><rect x="0" y="0" width="13" height="13" rx="3" fill="#0b5fc4"/><path d="M3.2 6.6 L5.4 8.8 L9.8 4.2" stroke="#fff" stroke-width="1" fill="none"/></svg></div>
</div>
<div class="row" style="top:243px;background:#f4f4f4">
<div style="position:absolute;left:1px;top:1px"><svg class="ck" width="16" height="16" viewBox="0 0 16 16"><circle cx="8" cy="8" r="7.6" fill="#0f8a17"/><circle cx="8" cy="8" r="6.6" fill="#14a01e"/><path d="M4.3 8.2 L6.9 10.6 L11.8 5.6" stroke="#e8ffe8" stroke-width="1.9" fill="none" stroke-linecap="round" stroke-linejoin="round"/></svg></div>
<span class="c" style="left:337px">8</span>
<span class="c" style="left:377px;letter-spacing:0.22px">Seek Time Performance</span>
<span class="c" style="left:582px">50</span>
<span class="c" style="left:633px">100</span>
<span class="c" style="left:684px">100</span>
<span class="c" style="left:735px">OK</span>
<span class="c b" style="left:849px">000000000000</span>
<div class="ofs"><div class="bm"><i></i></div><div class="bv">0</div><div class="bp"><i></i><b></b></div></div>
<div class="en"><svg width="13" height="13" viewBox="0 0 13 13"><rect x="0" y="0" width="13" height="13" rx="3" fill="#0b5fc4"/><path d="M3.2 6.6 L5.4 8.8 L9.8 4.2" stroke="#fff" stroke-width="1" fill="none"/></svg></div>
</div>
<div class="row" style="top:261px;background:#ffffff">
<span class="c" style="left:337px">9</span>
<span class="c" style="left:377px;letter-spacing:0.22px">Power On Time Count</span>
<span class="c" style="left:582px">0</span>
<span class="c" style="left:633px">94</span>
<span class="c" style="left:684px">94</span>
<span class="c" style="left:735px">OK (Always passing)</span>
<span class="c b" style="left:849px">000000000A9E</span>
<div class="ofs"><div class="bm"><i></i></div><div class="bv">0</div><div class="bp"><i></i><b></b></div></div>
<div class="en"><svg width="13" height="13" viewBox="0 0 13 13"><rect x="0" y="0" width="13" height="13" rx="3" fill="#0b5fc4"/><path d="M3.2 6.6 L5.4 8.8 L9.8 4.2" stroke="#fff" stroke-width="1" fill="none"/></svg></div>
</div>
<div class="row" style="top:279px;background:#f4f4f4">
<div style="position:absolute;left:1px;top:1px"><svg class="ck" width="16" height="16" viewBox="0 0 16 16"><circle cx="8" cy="8" r="7.6" fill="#0f8a17"/><circle cx="8" cy="8" r="6.6" fill="#14a01e"/><path d="M4.3 8.2 L6.9 10.6 L11.8 5.6" stroke="#e8ffe8" stroke-width="1.9" fill="none" stroke-linecap="round" stroke-linejoin="round"/></svg></div>
<span class="c" style="left:337px">10</span>
<span class="c" style="left:377px;letter-spacing:0.22px">Spin Retry Count</span>
<span class="c" style="left:582px">30</span>
<span class="c" style="left:633px">208</span>
<span class="c" style="left:684px">100</span>
<span class="c" style="left:735px">OK</span>
<span class="c b" style="left:849px">000000000000</span>
<div class="ofs"><div class="bm"><i></i></div><div class="bv">0</div><div class="bp"><i></i><b></b></div></div>
<div class="en"><svg width="13" height="13" viewBox="0 0 13 13"><rect x="0" y="0" width="13" height="13" rx="3" fill="#0b5fc4"/><path d="M3.2 6.6 L5.4 8.8 L9.8 4.2" stroke="#fff" stroke-width="1" fill="none"/></svg></div>
</div>
<div class="row" style="top:297px;background:#ffffff">
<span class="c" style="left:337px">12</span>
<span class="c" style="left:377px;letter-spacing:0.22px">Drive Power Cycle Count</span>
<span class="c" style="left:582px">0</span>
<span class="c" style="left:633px">100</span>
<span class="c" style="left:684px">100</span>
<span class="c" style="left:735px">OK (Always passing)</span>
<span class="c b" style="left:849px">000000000B36</span>
<div class="ofs"><div class="bm"><i></i></div><div class="bv">0</div><div class="bp"><i></i><b></b></div></div>
<div class="en"><svg width="13" height="13" viewBox="0 0 13 13"><rect x="0" y="0" width="13" height="13" rx="3" fill="#0b5fc4"/><path d="M3.2 6.6 L5.4 8.8 L9.8 4.2" stroke="#fff" stroke-width="1" fill="none"/></svg></div>
</div>
<div class="row" style="top:315px;background:#ffffff">
<span class="c" style="left:337px">191</span>
<span class="c" style="left:377px;letter-spacing:0.22px">G-Sense Error Rate</span>
<span class="c" style="left:582px">0</span>
<span class="c" style="left:633px">100</span>
<span class="c" style="left:684px">100</span>
<span class="c" style="left:735px">OK (Always passing)</span>
<span class="c b" style="left:849px">000000000000</span>
<div class="ofs"><div class="bm"><i></i></div><div class="bv">0</div><div class="bp"><i></i><b></b></div></div>
<div class="en"><svg width="13" height="13" viewBox="0 0 13 13"><rect x="0" y="0" width="13" height="13" rx="3" fill="#0b5fc4"/><path d="M3.2 6.6 L5.4 8.8 L9.8 4.2" stroke="#fff" stroke-width="1" fill="none"/></svg></div>
</div>
<div class="row" style="top:333px;background:#ffffff">
<span class="c" style="left:337px">192</span>
<span class="c" style="left:377px;letter-spacing:0.22px">Power off Retract Cycle Count</span>
<span class="c" style="left:582px">0</span>
<span class="c" style="left:633px">100</span>
<span class="c" style="left:684px">100</span>
<span class="c" style="left:735px">OK (Always passing)</span>
<span class="c b" style="left:849px">000000000090</span>
<div class="ofs"><div class="bm"><i></i></div><div class="bv">0</div><div class="bp"><i></i><b></b></div></div>
<div class="en"><svg width="13" height="13" viewBox="0 0 13 13"><rect x="0" y="0" width="13" height="13" rx="3" fill="#0b5fc4"/><path d="M3.2 6.6 L5.4 8.8 L9.8 4.2" stroke="#fff" stroke-width="1" fill="none"/></svg></div>
</div>
<div class="row" style="top:351px;background:#ffffff">
<span class="c" style="left:337px">193</span>
<span class="c" style="left:377px;letter-spacing:0.22px">Load/Unload Cycle Count</span>
<span class="c" style="left:582px">0</span>
<span class="c" style="left:633px">99</span>
<span class="c" style="left:684px">99</span>
<span class="c" style="left:735px">OK (Always passing)</span>
<span class="c b" style="left:849px">000000004409</span>
<div class="ofs"><div class="bm"><i></i></div><div class="bv">0</div><div class="bp"><i></i><b></b></div></div>
<div class="en"><svg width="13" height="13" viewBox="0 0 13 13"><rect x="0" y="0" width="13" height="13" rx="3" fill="#0b5fc4"/><path d="M3.2 6.6 L5.4 8.8 L9.8 4.2" stroke="#fff" stroke-width="1" fill="none"/></svg></div>
</div>
<div class="row" style="top:369px;background:#ffffff">
<span class="c" style="left:337px">194</span>
<span class="c" style="left:377px;letter-spacing:0.22px">Disk Temperature</span>
<span class="c" style="left:582px">0</span>
<span class="c" style="left:633px">100</span>
<span class="c" style="left:684px">100</span>
<span class="c" style="left:735px">OK (Always passing)</span>
<span class="c b" style="left:849px">002E000B001D</span>
<div class="ofs"><div class="bm"><i></i></div><div class="bv">0</div><div class="bp"><i></i><b></b></div></div>
<div class="en"><svg width="13" height="13" viewBox="0 0 13 13"><rect x="0" y="0" width="13" height="13" rx="3" fill="#0b5fc4"/><path d="M3.2 6.6 L5.4 8.8 L9.8 4.2" stroke="#fff" stroke-width="1" fill="none"/></svg></div>
</div>
<div class="row" style="top:387px;background:#f4f4f4">
<div style="position:absolute;left:1px;top:1px"><svg class="ck" width="16" height="16" viewBox="0 0 16 16"><circle cx="8" cy="8" r="7.6" fill="#0f8a17"/><circle cx="8" cy="8" r="6.6" fill="#14a01e"/><path d="M4.3 8.2 L6.9 10.6 L11.8 5.6" stroke="#e8ffe8" stroke-width="1.9" fill="none" stroke-linecap="round" stroke-linejoin="round"/></svg></div>
<span class="c" style="left:337px">196</span>
<span class="c" style="left:377px;letter-spacing:0.22px">Reallocation Event Count</span>
<span class="c" style="left:582px">0</span>
<span class="c" style="left:633px">100</span>
<span class="c" style="left:684px">100</span>
<span class="c" style="left:735px">OK (Always passing)</span>
<span class="c b" style="left:849px">000000000000</span>
<div class="ofs"><div class="bm"><i></i></div><div class="bv">0</div><div class="bp"><i></i><b></b></div></div>
<div class="en"><svg width="13" height="13" viewBox="0 0 13 13"><rect x="0" y="0" width="13" height="13" rx="3" fill="#0b5fc4"/><path d="M3.2 6.6 L5.4 8.8 L9.8 4.2" stroke="#fff" stroke-width="1" fill="none"/></svg></div>
</div>
<div class="row" style="top:405px;background:#f4f4f4">
<div style="position:absolute;left:1px;top:1px"><svg class="ck" width="16" height="16" viewBox="0 0 16 16"><circle cx="8" cy="8" r="7.6" fill="#0f8a17"/><circle cx="8" cy="8" r="6.6" fill="#14a01e"/><path d="M4.3 8.2 L6.9 10.6 L11.8 5.6" stroke="#e8ffe8" stroke-width="1.9" fill="none" stroke-linecap="round" stroke-linejoin="round"/></svg></div>
<span class="c" style="left:337px">197</span>
<span class="c" style="left:377px;letter-spacing:0.22px">Current Pending Sector Count</span>
<span class="c" style="left:582px">0</span>
<span class="c" style="left:633px">100</span>
<span class="c" style="left:684px">100</span>
<span class="c" style="left:735px">OK (Always passing)</span>
<span class="c b" style="left:849px">000000000000</span>
<div class="ofs"><div class="bm"><i></i></div><div class="bv">0</div><div class="bp"><i></i><b></b></div></div>
<div class="en"><svg width="13" height="13" viewBox="0 0 13 13"><rect x="0" y="0" width="13" height="13" rx="3" fill="#0b5fc4"/><path d="M3.2 6.6 L5.4 8.8 L9.8 4.2" stroke="#fff" stroke-width="1" fill="none"/></svg></div>
</div>
<div class="row" style="top:423px;background:#f4f4f4">
<div style="position:absolute;left:1px;top:1px"><svg class="ck" width="16" height="16" viewBox="0 0 16 16"><circle cx="8" cy="8" r="7.6" fill="#0f8a17"/><circle cx="8" cy="8" r="6.6" fill="#14a01e"/><path d="M4.3 8.2 L6.9 10.6 L11.8 5.6" stroke="#e8ffe8" stroke-width="1.9" fill="none" stroke-linecap="round" stroke-linejoin="round"/></svg></div>
<span class="c" style="left:337px">198</span>
<span class="c" style="left:377px;letter-spacing:0.22px">Off-Line Uncorrectable Sector Count</span>
<span class="c" style="left:582px">0</span>
<span class="c" style="left:633px">100</span>
<span class="c" style="left:684px">100</span>
<span class="c" style="left:735px">OK (Always passing)</span>
<span class="c b" style="left:849px">000000000000</span>
<div class="ofs"><div class="bm"><i></i></div><div class="bv">0</div><div class="bp"><i></i><b></b></div></div>
<div class="en"><svg width="13" height="13" viewBox="0 0 13 13"><rect x="0" y="0" width="13" height="13" rx="3" fill="#0b5fc4"/><path d="M3.2 6.6 L5.4 8.8 L9.8 4.2" stroke="#fff" stroke-width="1" fill="none"/></svg></div>
</div>
<div class="row" style="top:441px;background:#ffffff">
<span class="c" style="left:337px">199</span>
<span class="c" style="left:377px;letter-spacing:0.22px">Ultra ATA CRC Error Count</span>
<span class="c" style="left:582px">0</span>
<span class="c" style="left:633px">200</span>
<span class="c" style="left:684px">253</span>
<span class="c" style="left:735px">OK (Always passing)</span>
<span class="c b" style="left:849px">000000000001</span>
<div class="ofs"><div class="bm"><i></i></div><div class="bv">0</div><div class="bp"><i></i><b></b></div></div>
<div class="en"><svg width="13" height="13" viewBox="0 0 13 13"><rect x="0" y="0" width="13" height="13" rx="3" fill="#0b5fc4"/><path d="M3.2 6.6 L5.4 8.8 L9.8 4.2" stroke="#fff" stroke-width="1" fill="none"/></svg></div>
</div>
<div class="row" style="top:459px;background:#ffffff">
<span class="c" style="left:337px">220</span>
<span class="c" style="left:377px;letter-spacing:0.22px">Disk Shift</span>
<span class="c" style="left:582px">0</span>
<span class="c" style="left:633px">100</span>
<span class="c" style="left:684px">100</span>
<span class="c" style="left:735px">OK (Always passing)</span>
<span class="c b" style="left:849px">000000000057</span>
<div class="ofs"><div class="bm"><i></i></div><div class="bv">0</div><div class="bp"><i></i><b></b></div></div>
<div class="en"><svg width="13" height="13" viewBox="0 0 13 13"><rect x="0" y="0" width="13" height="13" rx="3" fill="#0b5fc4"/><path d="M3.2 6.6 L5.4 8.8 L9.8 4.2" stroke="#fff" stroke-width="1" fill="none"/></svg></div>
</div>
<div class="row" style="top:477px;background:#ffffff">
<span class="c" style="left:337px">222</span>
<span class="c" style="left:377px;letter-spacing:0.22px">Loaded Hours</span>
<span class="c" style="left:582px">0</span>
<span class="c" style="left:633px">97</span>
<span class="c" style="left:684px">97</span>
<span class="c" style="left:735px">OK (Always passing)</span>
<span class="c b" style="left:849px">0000000005DF</span>
<div class="ofs"><div class="bm"><i></i></div><div class="bv">0</div><div class="bp"><i></i><b></b></div></div>
<div class="en"><svg width="13" height="13" viewBox="0 0 13 13"><rect x="0" y="0" width="13" height="13" rx="3" fill="#0b5fc4"/><path d="M3.2 6.6 L5.4 8.8 L9.8 4.2" stroke="#fff" stroke-width="1" fill="none"/></svg></div>
</div>
<div class="row" style="top:495px;background:#ffffff">
<span class="c" style="left:337px">223</span>
<span class="c" style="left:377px;letter-spacing:0.22px">Load/Unload Retry Count</span>
<span class="c" style="left:582px">0</span>
<span class="c" style="left:633px">100</span>
<span class="c" style="left:684px">100</span>
<span class="c" style="left:735px">OK (Always passing)</span>
<span class="c b" style="left:849px">000000000000</span>
<div class="ofs"><div class="bm"><i></i></div><div class="bv">0</div><div class="bp"><i></i><b></b></div></div>
<div class="en"><svg width="13" height="13" viewBox="0 0 13 13"><rect x="0" y="0" width="13" height="13" rx="3" fill="#0b5fc4"/><path d="M3.2 6.6 L5.4 8.8 L9.8 4.2" stroke="#fff" stroke-width="1" fill="none"/></svg></div>
</div>
<div class="row" style="top:513px;background:#ffffff">
<span class="c" style="left:337px">224</span>
<span class="c" style="left:377px;letter-spacing:0.22px">Load Friction</span>
<span class="c" style="left:582px">0</span>
<span class="c" style="left:633px">100</span>
<span class="c" style="left:684px">100</span>
<span class="c" style="left:735px">OK (Always passing)</span>
<span class="c b" style="left:849px">000000000000</span>
<div class="ofs"><div class="bm"><i></i></div><div class="bv">0</div><div class="bp"><i></i><b></b></div></div>
<div class="en"><svg width="13" height="13" viewBox="0 0 13 13"><rect x="0" y="0" width="13" height="13" rx="3" fill="#0b5fc4"/><path d="M3.2 6.6 L5.4 8.8 L9.8 4.2" stroke="#fff" stroke-width="1" fill="none"/></svg></div>
</div>
<div class="row" style="top:531px;background:#ffffff">
<span class="c" style="left:337px">226</span>
<span class="c" style="left:377px;letter-spacing:0.22px">Load-in Time</span>
<span class="c" style="left:582px">0</span>
<span class="c" style="left:633px">100</span>
<span class="c" style="left:684px">100</span>
<span class="c" style="left:735px">OK (Always passing)</span>
<span class="c b" style="left:849px">00000000011E</span>
<div class="ofs"><div class="bm"><i></i></div><div class="bv">0</div><div class="bp"><i></i><b></b></div></div>
<div class="en"><svg width="13" height="13" viewBox="0 0 13 13"><rect x="0" y="0" width="13" height="13" rx="3" fill="#0b5fc4"/><path d="M3.2 6.6 L5.4 8.8 L9.8 4.2" stroke="#fff" stroke-width="1" fill="none"/></svg></div>
</div>
<div class="row" style="top:549px;background:#f4f4f4">
<div style="position:absolute;left:1px;top:1px"><svg class="ck" width="16" height="16" viewBox="0 0 16 16"><circle cx="8" cy="8" r="7.6" fill="#0f8a17"/><circle cx="8" cy="8" r="6.6" fill="#14a01e"/><path d="M4.3 8.2 L6.9 10.6 L11.8 5.6" stroke="#e8ffe8" stroke-width="1.9" fill="none" stroke-linecap="round" stroke-linejoin="round"/></svg></div>
<span class="c" style="left:337px">240</span>
<span class="c" style="left:377px;letter-spacing:0.22px">Head Flying Hours</span>
<span class="c" style="left:582px">1</span>
<span class="c" style="left:633px">100</span>
<span class="c" style="left:684px">100</span>
<span class="c" style="left:735px">OK</span>
<span class="c b" style="left:849px">000000000000</span>
<div class="ofs"><div class="bm"><i></i></div><div class="bv">0</div><div class="bp"><i></i><b></b></div></div>
<div class="en"><svg width="13" height="13" viewBox="0 0 13 13"><rect x="0" y="0" width="13" height="13" rx="3" fill="#0b5fc4"/><path d="M3.2 6.6 L5.4 8.8 L9.8 4.2" stroke="#fff" stroke-width="1" fill="none"/></svg></div>
</div>

<div id="gbox"></div>
<div id="gtab"><span>Raw Read Error Rate</span></div>
<div id="graph">
<svg class="abs" style="left:0;top:0" width="1348" height="170" viewBox="0 0 1348 170">
 <g transform="translate(-319,-826)" shape-rendering="crispEdges">
  <line x1="386" y1="843.5" x2="1532" y2="843.5" stroke="#111" stroke-width="1" stroke-dasharray="4 3"/>
  <line x1="386" y1="936.5" x2="1532" y2="936.5" stroke="#111" stroke-width="1" stroke-dasharray="4 3"/>
  <line x1="386" y1="890.5" x2="1532" y2="890.5" stroke="#9a9a9a" stroke-width="1" stroke-dasharray="3 4"/>
  <line x1="961.5" y1="843" x2="961.5" y2="940" stroke="#9a9a9a" stroke-width="1" stroke-dasharray="3 4"/>
  <line x1="390.5" y1="843" x2="390.5" y2="937" stroke="#111" stroke-width="1.2"/>
  <line x1="1532.5" y1="843" x2="1532.5" y2="937" stroke="#111" stroke-width="1.2"/>
  <line x1="386" y1="843.5" x2="390" y2="843.5" stroke="#888"/>
  <line x1="386" y1="890.5" x2="390" y2="890.5" stroke="#888"/>
  <line x1="386" y1="936.5" x2="390" y2="936.5" stroke="#888"/>
  <rect x="952.5" y="871.5" width="17" height="15" fill="#fff" stroke="#111" stroke-dasharray="1 1"/>
 </g>
 <circle cx="642" cy="64" r="2.2" fill="#10206a"/>
</svg>
<span class="gl" style="left:61px;top:11px">1</span>
<span class="gl" style="left:61px;top:58px">0</span>
<span class="gl" style="left:58px;top:104px">-1</span>
<span class="gl" style="left:639px;top:46px">0</span>
<span class="gl gd" style="left:613px;top:134px">18.02.2025</span>
</div>
<div id="rpanel">
 <span class="rp" style="left:0;top:0">Flags</span>
 <span class="rp" style="left:0;top:16px;font-weight:bold">Error-Rate, Statistical, Critical</span>
 <svg class="abs" style="left:-1px;top:72px" width="13" height="13" viewBox="0 0 13 13"><rect x="0" y="0" width="13" height="13" rx="3" fill="#0b5fc4"/><path d="M3.2 6.6 L5.4 8.8 L9.8 4.2" stroke="#fff" stroke-width="1" fill="none"/></svg>
 <span class="rp" style="left:15px;top:73px">Show values</span>
 <span class="rp" style="left:0;top:117px">Attribute graph</span>
 <div class="dd"><span class="rp" style="left:3px;top:4px">Display data field</span><svg class="abs" style="left:203px;top:8px" width="9" height="6" viewBox="0 0 9 6"><path d="M0.5 0.8 L4.5 4.8 L8.5 0.8" stroke="#444" stroke-width="1" fill="none"/></svg></div>
</div>
<div id="status"><span>Status last updated: 18.02.2025 11:55:04</span></div>
<div id="taskbar">
 <svg class="abs" style="left:617px;top:12px" width="24" height="24" viewBox="0 0 24 24">
  <defs><linearGradient id="wl" x1="0" y1="0" x2="1" y2="1"><stop offset="0" stop-color="#7fdcff"/><stop offset="1" stop-color="#1590e8"/></linearGradient></defs>
  <rect x="0" y="0" width="11.3" height="11.3" fill="url(#wl)"/><rect x="12.5" y="0" width="11.3" height="11.3" fill="url(#wl)"/>
  <rect x="0" y="12.5" width="11.3" height="11.3" fill="url(#wl)"/><rect x="12.5" y="12.5" width="11.3" height="11.3" fill="url(#wl)"/>
 </svg>
 <div class="abs" style="left:654px;top:8px;width:217px;height:32px;border-radius:16px;background:#2b3c41"></div>
 <svg class="abs" style="left:664px;top:15px" width="18" height="18" viewBox="0 0 18 18"><circle cx="10.5" cy="7.2" r="5.3" stroke="#d6dadc" stroke-width="1.6" fill="#4a5a5e"/><path d="M6.6 11.2 L1.8 16" stroke="#d6dadc" stroke-width="1.9" stroke-linecap="round"/></svg>
 <span class="abs" style="left:690px;top:15px;font-size:14px;color:#d8dcde">Hledat</span>
 <svg class="abs" style="left:815px;top:10px" width="57" height="28" viewBox="0 0 57 28">
  <ellipse cx="10" cy="6" rx="5" ry="3" fill="#e6ecf0"/><ellipse cx="18" cy="5" rx="4" ry="2.4" fill="#e6ecf0"/>
  <path d="M4 27 Q8 14 30 10 Q50 7 56 12 Q56 22 48 27 Z" fill="#2a9de0"/>
  <ellipse cx="33" cy="17" rx="13" ry="5" fill="#0d5fa8"/><ellipse cx="33" cy="17" rx="8" ry="3" fill="#063f7a"/>
  <path d="M12 15 Q14 22 20 24" stroke="#e9c898" stroke-width="2.5" fill="none"/><path d="M52 15 Q50 22 44 24" stroke="#e9c898" stroke-width="2.5" fill="none"/>
 </svg>
 <svg class="abs" style="left:885px;top:13px" width="25" height="23" viewBox="0 0 25 23"><rect x="0" y="6" width="18" height="16" rx="1.5" fill="#6b6f71"/><rect x="6" y="0" width="18" height="16" rx="1.5" fill="#f0f0f0"/><rect x="6" y="6" width="12" height="10" fill="#b9bbbc"/></svg>
 <svg class="abs" style="left:929px;top:13px" width="25" height="22" viewBox="0 0 25 22"><path d="M0 2 Q0 0 2 0 L9 0 L11 2.5 L23 2.5 Q24.5 2.5 24.5 4 L24.5 21 L0 21 Z" fill="#f0b41c"/><rect x="0" y="5" width="24.5" height="16.5" rx="1" fill="#fcd15a"/><rect x="5.5" y="15" width="13.5" height="6.5" rx="1.5" fill="#1577d0"/></svg>
 <svg class="abs" style="left:973px;top:12px" width="24" height="25" viewBox="0 0 24 25"><path d="M7 5 L7 2 Q7 0.8 8.2 0.8 L15.8 0.8 Q17 0.8 17 2 L17 5" stroke="#35a8e8" stroke-width="1.8" fill="none"/><rect x="0.5" y="4.5" width="23" height="19.5" rx="3" fill="#f4f4f4"/><rect x="7" y="9.5" width="4.4" height="4.4" fill="#f25022"/><rect x="12.2" y="9.5" width="4.4" height="4.4" fill="#7fba00"/><rect x="7" y="14.7" width="4.4" height="4.4" fill="#00a4ef"/><rect x="12.2" y="14.7" width="4.4" height="4.4" fill="#ffb900"/></svg>
 <svg class="abs" style="left:1024px;top:15px" width="11" height="17" viewBox="0 0 11 17"><path d="M0 0 H3.4 L7.6 10.5 V0 H11 V17 H7.6 L3.4 6.5 V17 H0 Z" fill="#d81f26"/></svg>
 <svg class="abs" style="left:1061px;top:12px" width="24" height="24" viewBox="0 0 24 24"><circle cx="12" cy="12" r="11.8" fill="#f7c21c"/><path d="M12 12 L1.8 6 A11.8 11.8 0 0 1 22.2 6 Z" fill="#dd4436"/><path d="M12 12 L1.8 6 A11.8 11.8 0 0 0 9 23.4 Z" fill="#1fa047"/><circle cx="12" cy="12" r="5.4" fill="#fff"/><circle cx="12" cy="12" r="4.2" fill="#2b78e6"/></svg>
 <div class="ind" style="left:1070px"></div>
 <svg class="abs" style="left:1106px;top:12px" width="23" height="23" viewBox="0 0 23 23"><circle cx="11.5" cy="11.5" r="11.5" fill="#1ed35e"/><path d="M5 8 Q12 5.5 18.5 9" stroke="#111" stroke-width="2.2" fill="none" stroke-linecap="round"/><path d="M5.8 11.8 Q11.5 9.8 17 12.6" stroke="#111" stroke-width="1.9" fill="none" stroke-linecap="round"/><path d="M6.5 15.2 Q11.5 13.6 15.8 15.8" stroke="#111" stroke-width="1.6" fill="none" stroke-linecap="round"/></svg>
 <div class="ind" style="left:1114px"></div>
 <svg class="abs" style="left:1152px;top:12px" width="19" height="25" viewBox="0 0 19 25"><rect x="0" y="2.4" width="18" height="19" fill="#5ac2ea"/><rect x="2" y="1" width="1.5" height="3" fill="#1a6f8a"/><rect x="6" y="1" width="1.5" height="3" fill="#1a6f8a"/><rect x="10" y="1" width="1.5" height="3" fill="#1a6f8a"/><rect x="14" y="1" width="1.5" height="3" fill="#1a6f8a"/><rect x="3.3" y="7.6" width="11.5" height="1.5" fill="#1a7fa0"/><rect x="3.3" y="11.5" width="11.5" height="1.5" fill="#1a7fa0"/><rect x="3.3" y="15.5" width="11.5" height="1.5" fill="#1a7fa0"/><rect x="0" y="21.4" width="18" height="1.3" fill="#f2e4cf"/><rect x="0" y="22.7" width="18" height="1.6" fill="#b0622a"/></svg>
 <div class="ind" style="left:1158px"></div>
 <svg class="abs" style="left:1193px;top:12px" width="24" height="24" viewBox="0 0 24 24"><path d="M12 0.3 L14.6 0.3 L15.4 3.4 L18.2 5 L21.1 4 L23 7.2 L20.8 9.4 L20.8 14.6 L23 16.8 L21.1 20 L18.2 19 L15.4 20.6 L14.6 23.7 L9.4 23.7 L8.6 20.6 L5.8 19 L2.9 20 L1 16.8 L3.2 14.6 L3.2 9.4 L1 7.2 L2.9 4 L5.8 5 L8.6 3.4 L9.4 0.3 Z" fill="#8f9397"/><circle cx="12" cy="12" r="6.4" fill="#f4f8fc"/><circle cx="12" cy="12" r="4.8" fill="#1760c0"/></svg>
 <div class="ind" style="left:1202px"></div>
 <svg class="abs" style="left:1238px;top:14px" width="23" height="22" viewBox="0 0 23 22">
 <path d="M3.5 2.5 L8 0.6 L22 0.6 L22 8.5 L10 10.5 L3.5 7 Z" fill="#e4e4e4"/>
 <path d="M3.5 2.5 L10 5.5 L22 3.5 L22 8.5 L10 10.5 L3.5 7 Z" fill="#d8d8d8"/>
 <path d="M0.3 3 L10 6.5 L10 11 L0.3 7.5 Z" fill="#4a4a4a"/>
 <rect x="6" y="9.5" width="6" height="2.2" fill="#222"/>
 <rect x="0.3" y="11.5" width="14.5" height="9.8" fill="#d6d6d6"/>
 <rect x="2.5" y="13.5" width="1.8" height="4" rx="0.8" fill="#3a3a3a"/>
 <rect x="7" y="14" width="1.8" height="4" rx="0.8" fill="#3a3a3a"/>
</svg>
<div class="ind" style="left:1246px"></div>
 <div class="abs" style="left:1273px;top:5px;width:40px;height:40px;border-radius:5px;background:#24373c"></div>
 <svg class="abs" style="left:1281px;top:12px" width="25" height="25" viewBox="0 0 25 25">
  <defs><linearGradient id="hr" x1="0" y1="1" x2="1" y2="0"><stop offset="0" stop-color="#fff" stop-opacity="0"/><stop offset="0.45" stop-color="#fff" stop-opacity="0"/><stop offset="1" stop-color="#f21010"/></linearGradient>
  <linearGradient id="hg" x1="0" y1="1" x2="1" y2="0"><stop offset="0" stop-color="#10e010"/><stop offset="0.55" stop-color="#fff" stop-opacity="0"/><stop offset="1" stop-color="#fff" stop-opacity="0"/></linearGradient></defs>
  <rect x="0" y="0" width="25" height="25" fill="#fff"/><rect x="0" y="0" width="25" height="25" fill="url(#hr)"/><rect x="0" y="0" width="25" height="25" fill="url(#hg)"/>
  <path d="M2 11 L4 7.5 L21 7.5 L23 11 Z" fill="#dedede"/><rect x="1.5" y="11" width="22" height="6.5" fill="#3a3a3a"/><rect x="4" y="13.5" width="1.5" height="1.5" fill="#3ec03e"/>
 </svg>
 <div class="ind" style="left:1285px;width:16px;background:#5fc6d6"></div>
 <svg class="abs" style="left:1714px;top:20px" width="14" height="8" viewBox="0 0 14 8"><path d="M1 7 L7 1 L13 7" stroke="#f2f2f2" stroke-width="1.2" fill="none"/></svg>
 <svg class="abs" style="left:1737px;top:18px" width="17" height="12" viewBox="0 0 17 12"><path d="M3 11.5 Q0 11.5 0.3 8.5 Q0.8 6 3.5 6.2 Q4.5 2 8.5 2 Q12 2 13 5.5 Q16.8 5.5 16.8 8.6 Q16.8 11.5 13.5 11.5 Z" fill="#e8e8e8"/><path d="M3.5 6.2 Q4.5 2 8.5 2 Q12 2 13 5.5 L8 8 Z" fill="#b8b8b8"/></svg>
 <svg class="abs" style="left:1764px;top:16px" width="18" height="17" viewBox="0 0 18 17"><path d="M11 2.5 H0.6 V11.5 H11" stroke="#f0f0f0" stroke-width="1.1" fill="none"/><path d="M5.5 11.5 V14.5 M2.5 15.5 H11" stroke="#f0f0f0" stroke-width="1.1"/><rect x="12.8" y="0.6" width="3.6" height="5" rx="1" stroke="#f0f0f0" stroke-width="1.1" fill="none"/><path d="M14.6 5.6 V16.5 M12 16 H15" stroke="#f0f0f0" stroke-width="1.1"/></svg>
 <svg class="abs" style="left:1788px;top:17px" width="18" height="14" viewBox="0 0 18 14"><path d="M0.6 4.5 H3.5 L7.5 0.8 V13.2 L3.5 9.5 H0.6 Z" stroke="#f0f0f0" stroke-width="1.1" fill="none"/><path d="M10 4.5 Q11.5 7 10 9.5 M12.3 2.8 Q14.8 7 12.3 11.2 M14.6 1 Q18 7 14.6 13" stroke="#f0f0f0" stroke-width="1.1" fill="none"/></svg>
 <span class="abs tt" style="right:44px;top:10px">11:55</span>
 <span class="abs tt" style="right:44px;top:26px">18.02.2025</span>
 <div class="abs" style="left:1884px;top:16px;width:16px;height:16px;border-radius:8px;background:#62c6d2;color:#10242a;font-size:11px;text-align:center;line-height:16px">3</div>
</div>

</body></html>
